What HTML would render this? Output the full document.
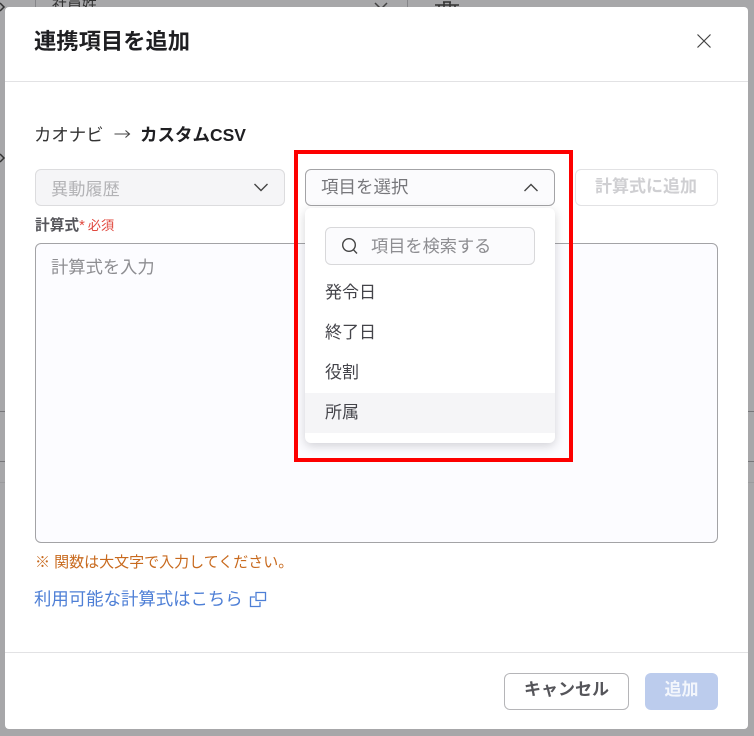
<!DOCTYPE html>
<html lang="ja">
<head>
<meta charset="utf-8">
<style>
html,body{margin:0;padding:0}
body{width:754px;height:736px;position:relative;overflow:hidden;background:#a7a7a9;font-family:"Liberation Sans","Noto Sans CJK JP",sans-serif;color:#4a4a4e}
.a{position:absolute;box-sizing:border-box;white-space:nowrap}
.t{line-height:24px}
</style>
</head>
<body>
<!-- background behind the overlay -->
<div class="a" style="left:35px;top:0;width:1px;height:7px;background:#858588"></div>
<div class="a" style="left:407px;top:0;width:1px;height:7px;background:#858588"></div>
<div class="a t" style="left:52px;top:-7px;font-size:15px;color:#333">社員姓</div>
<svg class="a" style="left:374px;top:0" width="14" height="8"><path d="M1 3l6 6 6-6" fill="none" stroke="#444" stroke-width="1.500"/></svg>
<svg class="a" style="left:434px;top:0" width="26" height="8"><path d="M1 5h24M5 5v3M10 2v6M16 2v6M21 5v3M9 2h8" fill="none" stroke="#333" stroke-width="1.500"/></svg>
<svg class="a" style="left:0;top:0" width="6" height="14"><path d="M0 3l4 4-4 4" fill="none" stroke="#333" stroke-width="1.500"/></svg>
<svg class="a" style="left:0;top:151px" width="6" height="14"><path d="M0 3l4 4-4 4" fill="none" stroke="#333" stroke-width="1.500"/></svg>
<div class="a" style="left:0;top:411px;width:754px;height:1px;background:#77777a"></div>
<div class="a" style="left:0;top:461px;width:754px;height:1px;background:#77777a"></div>
<div class="a" style="left:0;top:482px;width:754px;height:1px;background:#9b9b9d"></div>

<!-- dialog -->
<div class="a" style="left:5px;top:7px;width:743px;height:722px;background:#fff;border-radius:4px"></div>
<div class="a" style="left:34px;top:28px;font-size:22.300px;font-weight:700;line-height:28px;color:#1f1f22">連携項目を追加</div>
<svg class="a" style="left:696px;top:33px" width="16" height="16"><path d="M1.500 1.500L14.500 14.500M14.500 1.500L1.500 14.500" fill="none" stroke="#444" stroke-width="1.200"/></svg>
<div class="a" style="left:5px;top:81px;width:743px;height:1px;background:#e2e2e4"></div>

<div class="a t" style="left:34px;top:123px;font-size:17.400px;color:#333">カオナビ</div>
<svg class="a" style="left:113px;top:127px" width="19" height="14"><path d="M1.500 7h15M12.500 3.500L16.500 7l-4 3.500" fill="none" stroke="#444" stroke-width="1.100"/></svg>
<div class="a t" style="left:140px;top:123px;font-size:17.500px;font-weight:700;color:#1f1f22">カスタムCSV</div>

<div class="a" style="left:35px;top:169px;width:250px;height:37px;background:#f5f5f7;border:1px solid #dcdcde;border-radius:6px"></div>
<div class="a t" style="left:51px;top:177px;font-size:17.200px;color:#b3b3b6">異動履歴</div>
<svg class="a" style="left:253px;top:182px" width="16" height="11"><path d="M1.500 2l6.500 6.500L14.500 2" fill="none" stroke="#444" stroke-width="1.400"/></svg>

<div class="a" style="left:305px;top:169px;width:250px;height:37px;background:#fbfbfd;border:1px solid #a3a3a6;border-radius:6px"></div>
<div class="a t" style="left:321px;top:175px;font-size:17.500px;color:#77777b">項目を選択</div>
<svg class="a" style="left:523px;top:182px" width="16" height="11"><path d="M1.500 9L8 2.500 14.500 9" fill="none" stroke="#444" stroke-width="1.400"/></svg>

<div class="a" style="left:575px;top:169px;width:143px;height:37px;background:#fff;border:1px solid #e2e2e4;border-radius:6px"></div>
<div class="a t" style="left:595px;top:175px;font-size:17px;font-weight:700;color:#cfcfd2">計算式に追加</div>

<div class="a" style="left:35px;top:216px;font-size:14.700px;line-height:20px;font-weight:700;color:#55555a">計算式<span style="color:#e0483e;font-weight:400">*</span><span style="color:#e0483e;font-size:13.200px;font-weight:400;margin-left:3px">必須</span></div>

<div class="a" style="left:35px;top:243px;width:683px;height:300px;background:#fcfcff;border:1px solid #a3a3a6;border-radius:6px"></div>
<div class="a t" style="left:51px;top:255px;font-size:17.300px;color:#8d8d91">計算式を入力</div>

<div class="a" style="left:35px;top:553px;font-size:15px;line-height:20px;color:#c86a1e">※ 関数は大文字で入力してください。</div>
<div class="a t" style="left:34px;top:587px;font-size:17.400px;color:#4e7fd6">利用可能な計算式はこちら</div>
<svg class="a" style="left:249px;top:591px" width="18" height="17"><path d="M6 6H1.500v9.500H11V11M7 1.500h9.500V9.500H7z" fill="none" stroke="#4e7fd6" stroke-width="1.300"/></svg>

<div class="a" style="left:5px;top:652px;width:743px;height:1px;background:#e2e2e4"></div>
<div class="a" style="left:504px;top:673px;width:125px;height:37px;background:#fff;border:1px solid #b5b5b8;border-radius:6px"></div>
<div class="a t" style="left:504px;top:678px;width:125px;text-align:center;font-size:17px;font-weight:700;color:#55555a">キャンセル</div>
<div class="a" style="left:645px;top:673px;width:73px;height:37px;background:#bccced;border-radius:6px"></div>
<div class="a t" style="left:645px;top:678px;width:73px;text-align:center;font-size:17px;font-weight:700;color:#f3f6fc">追加</div>

<!-- dropdown -->
<div class="a" style="left:305px;top:208px;width:250px;height:235px;background:#fff;border-radius:6px;box-shadow:0 3px 10px rgba(60,60,70,.22);overflow:hidden">
  <div class="a" style="left:0;top:185px;width:250px;height:40px;background:#f5f5f7"></div>
</div>
<div class="a" style="left:325px;top:227px;width:210px;height:38px;background:#fbfbfd;border:1px solid #d8d8da;border-radius:6px"></div>
<svg class="a" style="left:341px;top:237px" width="18" height="19"><circle cx="8" cy="8" r="6.300" fill="none" stroke="#444" stroke-width="1.400"/><path d="M12.500 12.800L16 16.500" fill="none" stroke="#444" stroke-width="1.400"/></svg>
<div class="a t" style="left:371px;top:234px;font-size:17.200px;color:#8d8d91">項目を検索する</div>
<div class="a t" style="left:325px;top:281px;font-size:17px;color:#44444a">発令日</div>
<div class="a t" style="left:325px;top:321px;font-size:17px;color:#44444a">終了日</div>
<div class="a t" style="left:325px;top:361px;font-size:17px;color:#44444a">役割</div>
<div class="a t" style="left:325px;top:401px;font-size:17px;color:#44444a">所属</div>

<!-- red annotation -->
<div class="a" style="left:294px;top:150px;width:279px;height:312px;border:4px solid #fd0000"></div>
</body>
</html>
